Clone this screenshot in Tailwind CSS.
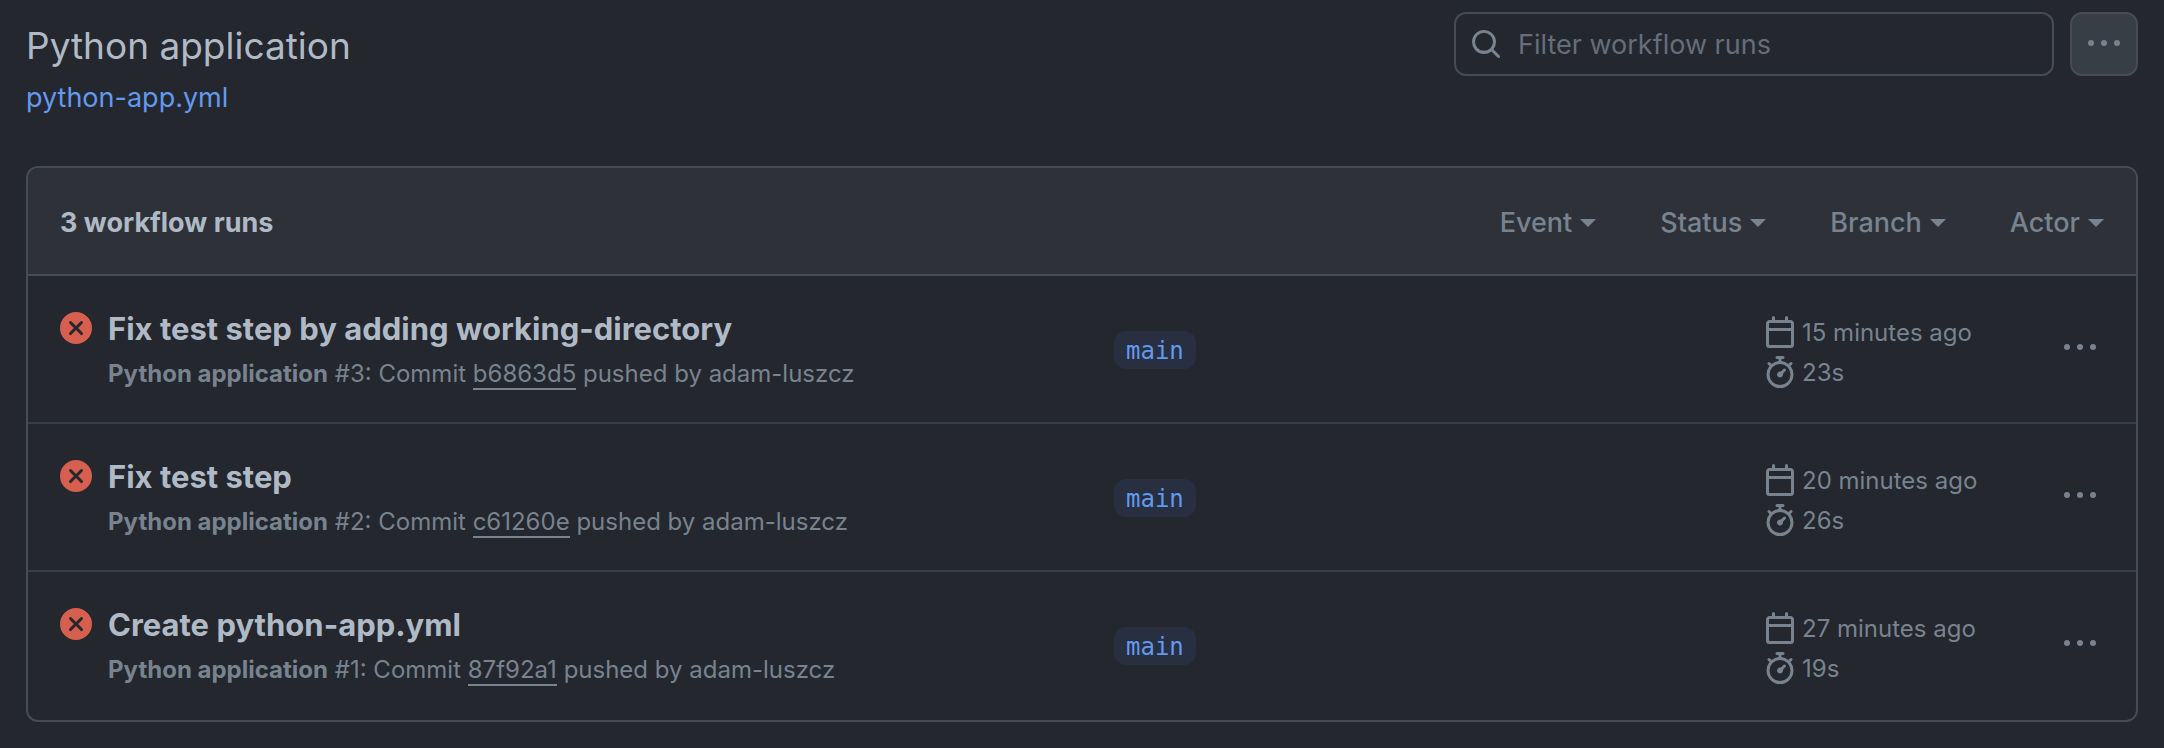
<!DOCTYPE html>
<html lang="en">
<head>
<meta charset="utf-8">
<meta name="viewport" content="width=device-width, initial-scale=1">
<title>Python application · Workflow runs</title>
<script src="https://cdn.jsdelivr.net/npm/@tailwindcss/browser@4"></script>
</head>
<body class="min-h-screen bg-[#24272e] font-['Inter','Liberation_Sans',sans-serif] text-[#afbac6]">

<svg class="hidden" aria-hidden="true">
  <symbol id="i-search" viewBox="0 0 16 16"><path d="M10.68 11.74a6 6 0 0 1-7.922-8.982 6 6 0 0 1 8.982 7.922l3.04 3.04a.749.749 0 0 1-.326 1.275.749.749 0 0 1-.734-.215ZM11.5 7a4.499 4.499 0 1 0-8.997 0A4.499 4.499 0 0 0 11.5 7Z"/></symbol>
  <symbol id="i-kebab" viewBox="0 0 16 16"><circle cx="1.5" cy="7.5" r="1.5"/><circle cx="8" cy="7.5" r="1.5"/><circle cx="14.5" cy="7.5" r="1.5"/></symbol>
  <symbol id="i-fail" viewBox="0 0 16 16"><path fill-rule="evenodd" d="M8 0a8 8 0 1 1 0 16A8 8 0 0 1 8 0ZM5.78 4.72a.75.75 0 0 0-1.06 1.06L6.94 8l-2.22 2.22a.75.75 0 1 0 1.06 1.06L8 9.06l2.22 2.22a.75.75 0 1 0 1.06-1.06L9.06 8l2.22-2.22a.75.75 0 0 0-1.06-1.06L8 6.94Z"/></symbol>
  <symbol id="i-calendar" viewBox="0 0 16 16"><path fill-rule="evenodd" d="M4.75 0a.75.75 0 0 1 .75.75V2h5V.75a.75.75 0 0 1 1.5 0V2h1.25c.966 0 1.75.784 1.75 1.75v10.5A1.75 1.75 0 0 1 13.25 16H2.75A1.75 1.75 0 0 1 1 14.25V3.75C1 2.784 1.784 2 2.75 2H4V.75A.75.75 0 0 1 4.75 0Zm0 3.5h-2a.25.25 0 0 0-.25.25V6h11V3.75a.25.25 0 0 0-.25-.25H4.75ZM2.5 7.5v6.75c0 .138.112.25.25.25h10.5a.25.25 0 0 0 .25-.25V7.5Z"/></symbol>
  <symbol id="i-watch" viewBox="0 0 16 16"><path d="M5.75.75A.75.75 0 0 1 6.5 0h3a.75.75 0 0 1 0 1.5h-.75v1l-.001.041a6.724 6.724 0 0 1 3.464 1.435l.007-.006.75-.75a.749.749 0 0 1 1.275.326.749.749 0 0 1-.215.734l-.75.75-.006.007a6.75 6.75 0 1 1-10.548 0L2.72 5.03l-.75-.75a.751.751 0 0 1 .018-1.042.751.751 0 0 1 1.042-.018l.75.75.007.006A6.72 6.72 0 0 1 7.25 2.541V1.5H6.5a.75.75 0 0 1-.75-.75ZM8 14.5a5.25 5.25 0 1 0-.001-10.501A5.25 5.25 0 0 0 8 14.5Zm.389-6.7 1.33-1.33a.75.75 0 1 1 1.061 1.06L9.45 8.861A1.503 1.503 0 0 1 8 10.75a1.499 1.499 0 1 1 .389-2.95Z"/></symbol>
  <symbol id="i-caret" viewBox="0 0 16 8"><path d="M0 0h16L8 8Z"/></symbol>
</svg>

<main class="px-[26px] pt-3 pb-6">
  <header class="flex items-start justify-between">
    <div class="pt-2">
      <h1 class="text-[37px] leading-[52px]">Python application</h1>
      <a href="#" class="block text-[27px] leading-[52px] text-[#6399ef]">python-app.yml</a>
    </div>
    <div class="flex gap-4">
      <label class="flex h-16 w-[600px] items-center gap-4 rounded-xl border-2 border-[#464c55] px-3.5">
        <svg class="size-8 shrink-0 fill-[#788390]" aria-hidden="true"><use href="#i-search"/></svg>
        <input type="search" aria-label="Filter workflow runs" placeholder="Filter workflow runs" class="min-w-0 flex-1 bg-transparent pt-0.5 text-[27px] outline-none placeholder:text-[#656e7a]">
      </label>
      <button type="button" aria-label="Show workflow options" class="flex h-16 w-[68px] items-center justify-center rounded-xl border-2 border-[#464c55] bg-[#383e46]">
        <svg class="size-8 fill-[#788390]" aria-hidden="true"><use href="#i-kebab"/></svg>
      </button>
    </div>
  </header>

  <section class="mt-[42px] overflow-hidden rounded-xl border-2 border-[#464c55]">
    <div class="flex h-[106px] items-center justify-between bg-[#2e3238] px-8 pt-1">
      <h2 class="text-[27px] font-bold">3 workflow runs</h2>
      <div class="flex gap-16 text-[27px] font-medium text-[#788390]">
        <button type="button" aria-haspopup="true" class="flex items-center gap-2">Event <svg class="h-2 w-4 fill-current" aria-hidden="true"><use href="#i-caret"/></svg></button>
        <button type="button" aria-haspopup="true" class="flex items-center gap-2">Status <svg class="h-2 w-4 fill-current" aria-hidden="true"><use href="#i-caret"/></svg></button>
        <button type="button" aria-haspopup="true" class="flex items-center gap-2">Branch <svg class="h-2 w-4 fill-current" aria-hidden="true"><use href="#i-caret"/></svg></button>
        <button type="button" aria-haspopup="true" class="flex items-center gap-2">Actor <svg class="h-2 w-4 fill-current" aria-hidden="true"><use href="#i-caret"/></svg></button>
      </div>
    </div>

    <ul>
      <li class="grid h-[148px] grid-cols-[1054fr_650fr_340fr] items-start border-t-2 border-[#464c55] px-8 pt-8">
        <div class="flex gap-4">
          <svg class="mt-1 size-8 shrink-0 fill-[#d65f50]" role="img" aria-label="Failed"><use href="#i-fail"/></svg>
          <div>
            <h3 class="text-[31px] leading-[42px] font-bold"><a href="#">Fix test step by adding working-directory</a></h3>
            <p class="text-2xl leading-[48px] text-[#788390]"><b class="font-bold">Python application</b> #3: Commit <a href="#" class="border-b-2 border-[#788390]">b6863d5</a> pushed by adam-luszcz</p>
          </div>
        </div>
        <div class="pt-[23px]"><a href="#" class="inline-block rounded-xl bg-[#272f40] px-3 pt-0.5 font-['DejaVu_Sans_Mono',monospace] text-2xl leading-9 text-[#6399ef]">main</a></div>
        <div class="flex items-start justify-between text-2xl text-[#788390]">
          <div class="pt-1">
            <div class="flex h-10 items-center gap-1.5"><svg class="size-8 fill-current" aria-hidden="true"><use href="#i-calendar"/></svg><span class="pt-0.5">15 minutes ago</span></div>
            <div class="flex h-10 items-center gap-1.5"><svg class="size-8 fill-current" aria-hidden="true"><use href="#i-watch"/></svg><span class="pt-0.5">23s</span></div>
          </div>
          <button type="button" aria-label="Show options" class="mt-6 flex w-12 justify-center"><svg class="size-8 fill-current" aria-hidden="true"><use href="#i-kebab"/></svg></button>
        </div>
      </li>
      <li class="grid h-[148px] grid-cols-[1054fr_650fr_340fr] items-start border-t-2 border-[#393e46] px-8 pt-8">
        <div class="flex gap-4">
          <svg class="mt-1 size-8 shrink-0 fill-[#d65f50]" role="img" aria-label="Failed"><use href="#i-fail"/></svg>
          <div>
            <h3 class="text-[31px] leading-[42px] font-bold"><a href="#">Fix test step</a></h3>
            <p class="text-2xl leading-[48px] text-[#788390]"><b class="font-bold">Python application</b> #2: Commit <a href="#" class="border-b-2 border-[#788390]">c61260e</a> pushed by adam-luszcz</p>
          </div>
        </div>
        <div class="pt-[23px]"><a href="#" class="inline-block rounded-xl bg-[#272f40] px-3 pt-0.5 font-['DejaVu_Sans_Mono',monospace] text-2xl leading-9 text-[#6399ef]">main</a></div>
        <div class="flex items-start justify-between text-2xl text-[#788390]">
          <div class="pt-1">
            <div class="flex h-10 items-center gap-1.5"><svg class="size-8 fill-current" aria-hidden="true"><use href="#i-calendar"/></svg><span class="pt-0.5">20 minutes ago</span></div>
            <div class="flex h-10 items-center gap-1.5"><svg class="size-8 fill-current" aria-hidden="true"><use href="#i-watch"/></svg><span class="pt-0.5">26s</span></div>
          </div>
          <button type="button" aria-label="Show options" class="mt-6 flex w-12 justify-center"><svg class="size-8 fill-current" aria-hidden="true"><use href="#i-kebab"/></svg></button>
        </div>
      </li>
      <li class="grid h-[150px] grid-cols-[1054fr_650fr_340fr] items-start border-t-2 border-[#393e46] px-8 pt-8">
        <div class="flex gap-4">
          <svg class="mt-1 size-8 shrink-0 fill-[#d65f50]" role="img" aria-label="Failed"><use href="#i-fail"/></svg>
          <div>
            <h3 class="text-[31px] leading-[42px] font-bold"><a href="#">Create python-app.yml</a></h3>
            <p class="text-2xl leading-[48px] text-[#788390]"><b class="font-bold">Python application</b> #1: Commit <a href="#" class="border-b-2 border-[#788390]">87f92a1</a> pushed by adam-luszcz</p>
          </div>
        </div>
        <div class="pt-[23px]"><a href="#" class="inline-block rounded-xl bg-[#272f40] px-3 pt-0.5 font-['DejaVu_Sans_Mono',monospace] text-2xl leading-9 text-[#6399ef]">main</a></div>
        <div class="flex items-start justify-between text-2xl text-[#788390]">
          <div class="pt-1">
            <div class="flex h-10 items-center gap-1.5"><svg class="size-8 fill-current" aria-hidden="true"><use href="#i-calendar"/></svg><span class="pt-0.5">27 minutes ago</span></div>
            <div class="flex h-10 items-center gap-1.5"><svg class="size-8 fill-current" aria-hidden="true"><use href="#i-watch"/></svg><span class="pt-0.5">19s</span></div>
          </div>
          <button type="button" aria-label="Show options" class="mt-6 flex w-12 justify-center"><svg class="size-8 fill-current" aria-hidden="true"><use href="#i-kebab"/></svg></button>
        </div>
      </li>
    </ul>
  </section>
</main>
</body>
</html>
